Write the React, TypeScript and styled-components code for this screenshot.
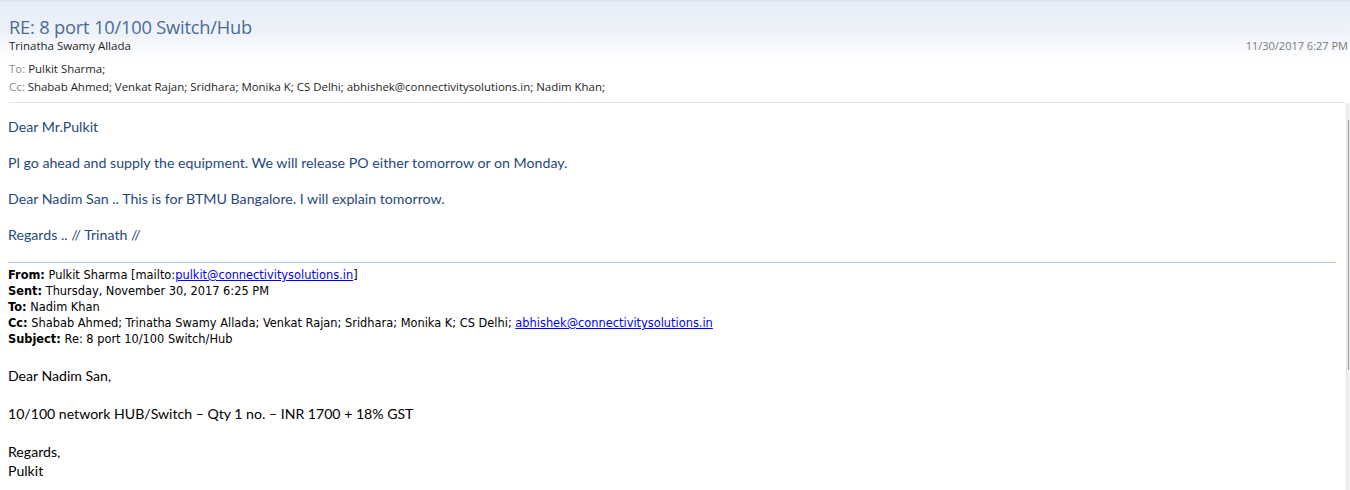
import styled, { createGlobalStyle } from "styled-components";

const GlobalStyle = createGlobalStyle`
  html, body {
    margin: 0;
    padding: 0;
    background: #ffffff;
  }
  body {
    width: 1350px;
    height: 490px;
    overflow: hidden;
  }
`;

const Window = styled.div`
  position: relative;
  width: 1350px;
  height: 490px;
  overflow: hidden;
  background: #ffffff;
`;

const Header = styled.div`
  border-top: 2px solid #dde3ec;
  background: linear-gradient(#e6edf8 0px, #eef2f9 30px, #ffffff 58px);
  padding: 13px 2px 0 9px;
  font-family: "Open Sans", "Noto Sans", sans-serif;
`;

const Title = styled.div`
  font-size: 18.3px;
  line-height: 24px;
  color: #4c6b97;
  letter-spacing: -0.2px;
`;

const SenderRow = styled.div`
  display: flex;
  justify-content: space-between;
  font-size: 11.5px;
  line-height: 14px;
  color: #1e1e1e;
`;

const Date = styled.span`
  font-size: 11px;
  color: #7a7a7a;
`;

const Recipients = styled.div`
  margin-top: 7px;
  font-size: 11.45px;
  line-height: 18px;
  color: #1e1e1e;
`;

const Label = styled.span`
  color: #8a8a8a;
`;

const Divider = styled.div`
  margin-top: 6px;
  margin-right: 4px;
  height: 1px;
  background: #e3e3e3;
`;

const Body = styled.div`
  padding: 15px 14px 0 8px;
`;

const Para = styled.p<{ $reply?: boolean }>`
  margin: 0 0 ${(p) => (p.$reply ? "19px" : "18px")};
  font-family: "Lato", "Open Sans", sans-serif;
  font-size: ${(p) => (p.$reply ? "14.1px" : "14.2px")};
  line-height: ${(p) => (p.$reply ? "19px" : "18px")};
  color: ${(p) => (p.$reply ? "#000000" : "#1f497d")};
`;

const Rule = styled.div`
  height: 1px;
  background: #b5c4df;
  margin: 0 0 4px;
`;

const FieldList = styled.div`
  font-family: "DejaVu Sans", Tahoma, sans-serif;
  font-size: 11.4px;
  line-height: 16px;
  color: #000000;
  margin-bottom: 19px;
`;

const Field = styled.div`
  white-space: nowrap;
`;

const FieldName = styled.b`
  font-weight: bold;
`;

const Mail = styled.a`
  color: #0000ff;
  text-decoration: underline;
`;

const ScrollTrack = styled.div`
  position: absolute;
  top: 103px;
  right: 0;
  bottom: 0;
  width: 3px;
  background: #f0f0f0;
  border-left: 1px solid #e6e6e6;
`;

const ScrollThumb = styled.div`
  margin-top: 17px;
  margin-left: 1px;
  width: 1px;
  height: 250px;
  background: #9a9a9a;
`;

export default function App() {
  return (
    <Window>
      <GlobalStyle />
      <Header>
        <Title>RE: 8 port 10/100 Switch/Hub</Title>
        <SenderRow>
          <span>Trinatha Swamy Allada</span>
          <Date>11/30/2017 6:27 PM</Date>
        </SenderRow>
        <Recipients>
          <div>
            <Label>To: </Label>Pulkit Sharma;
          </div>
          <div>
            <Label>Cc: </Label>Shabab Ahmed; Venkat Rajan; Sridhara; Monika K; CS
            Delhi; abhishek@connectivitysolutions.in; Nadim Khan;
          </div>
        </Recipients>
        <Divider />
      </Header>
      <Body>
        <Para>Dear Mr.Pulkit</Para>
        <Para>
          Pl go ahead and supply the equipment. We will release PO either
          tomorrow or on Monday.
        </Para>
        <Para>
          Dear Nadim San .. This is for BTMU Bangalore. I will explain tomorrow.
        </Para>
        <Para>Regards .. // Trinath //</Para>
        <Rule />
        <FieldList>
          <Field>
            <FieldName>From:</FieldName> Pulkit Sharma [mailto:
            <Mail href="#">pulkit@connectivitysolutions.in</Mail>]
          </Field>
          <Field>
            <FieldName>Sent:</FieldName> Thursday, November 30, 2017 6:25 PM
          </Field>
          <Field>
            <FieldName>To:</FieldName> Nadim Khan
          </Field>
          <Field>
            <FieldName>Cc:</FieldName> Shabab Ahmed; Trinatha Swamy Allada;
            Venkat Rajan; Sridhara; Monika K; CS Delhi;{" "}
            <Mail href="#">abhishek@connectivitysolutions.in</Mail>
          </Field>
          <Field>
            <FieldName>Subject:</FieldName> Re: 8 port 10/100 Switch/Hub
          </Field>
        </FieldList>
        <Para $reply>Dear Nadim San,</Para>
        <Para $reply>10/100 network HUB/Switch – Qty 1 no. – INR 1700 + 18% GST</Para>
        <Para $reply>
          Regards,
          <br />
          Pulkit
        </Para>
      </Body>
      <ScrollTrack>
        <ScrollThumb />
      </ScrollTrack>
    </Window>
  );
}
